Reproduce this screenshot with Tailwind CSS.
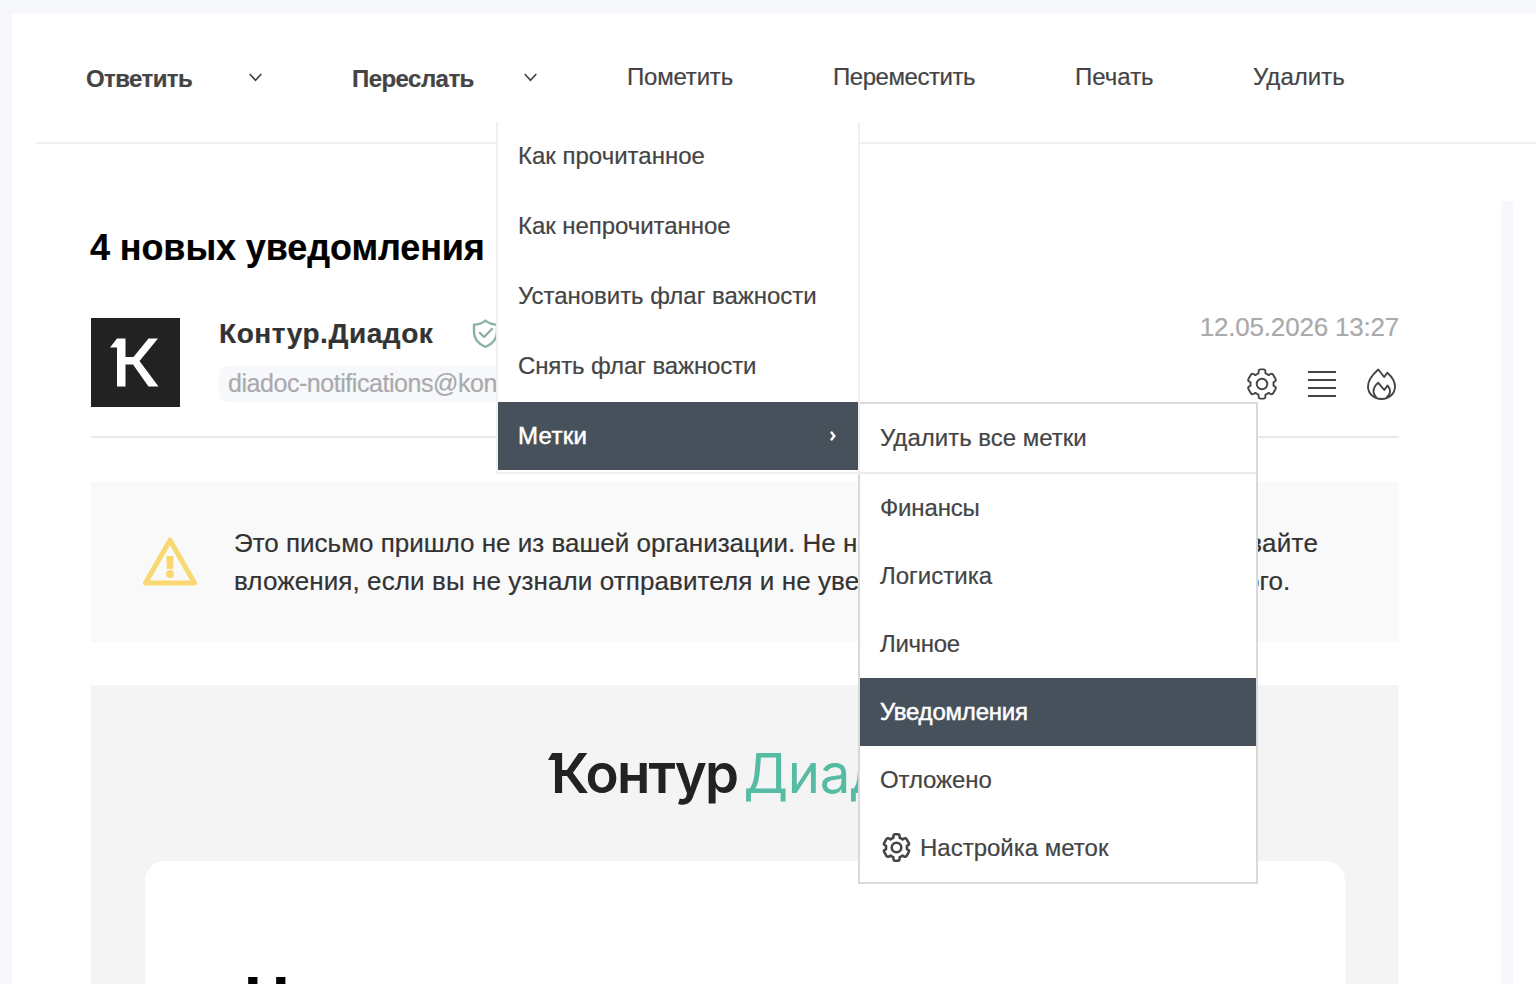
<!DOCTYPE html>
<html lang="ru">
<head>
  <meta charset="UTF-8" />
  <meta name="viewport" content="width=device-width, initial-scale=1.0"/>
  <title>4 новых уведомления</title>
  <script src="https://cdn.jsdelivr.net/npm/@tailwindcss/browser@4"></script>
</head>
<body class="h-screen overflow-hidden bg-[#f6f8fb] font-['Liberation_Sans',Arial,sans-serif] text-[24px] text-[#444] [-webkit-text-stroke:0.2px_currentColor]">
  <svg class="hidden">
    <symbol id="gear" viewBox="0 0 32 32">
      <path d="M12.6 5.2V3.1Q12.6 1.6 14.2 1.4H17.8Q19.4 1.6 19.4 3.1V5.2L22.7 7.1L24.5 6Q26 5.3 27 6.6L29.6 11.1Q30.3 12.5 29 13.4L27.5 14.3V17.7L29 18.6Q30.3 19.5 29.6 20.9L27 25.4Q26 26.7 24.5 26L22.7 24.9L19.4 26.8V28.9Q19.4 30.4 17.8 30.6H14.2Q12.6 30.4 12.6 28.9V26.8L9.3 24.9L7.5 26Q6 26.7 5 25.4L2.4 20.9Q1.7 19.5 3 18.6L4.5 17.7V14.3L3 13.4Q1.7 12.5 2.4 11.1L5 6.6Q6 5.3 7.5 6L9.3 7.1Z" fill="none" stroke="currentColor" stroke-linejoin="round"/>
      <circle cx="16" cy="16" r="5.3" fill="none" stroke="currentColor"/>
    </symbol>
  </svg>

  <div class="ml-3 mt-[14px] h-[970px] bg-white">
    <!-- Панель действий -->
    <div class="ml-6 flex h-[130px] items-center border-b-2 border-[#f0f0f0] pb-[2px] pl-[50px] leading-[28px]">
      <div class="w-[163px] pt-1 font-bold tracking-[-0.6px]">Ответить</div>
      <svg class="mr-[90px] w-[13px]" viewBox="0 0 13 9" fill="none" stroke="#444" stroke-width="1.7"><path d="M.7 1L6.5 7.3L12.3 1"/></svg>
      <div class="w-[172px] pt-1 font-bold tracking-[-0.55px]">Переслать</div>
      <svg class="mr-[90px] w-[13px]" viewBox="0 0 13 9" fill="none" stroke="#444" stroke-width="1.7"><path d="M.7 1L6.5 7.3L12.3 1"/></svg>
      <div class="w-[206px] tracking-[-0.2px]">Пометить</div>
      <div class="w-[242px] tracking-[-0.45px]">Переместить</div>
      <div class="w-[178px]">Печать</div>
      <div>Удалить</div>
    </div>

    <div class="flex h-[840px] overflow-hidden">
      <div class="w-[1489px] pl-[79px] pr-[102px]">
        <h1 class="-ml-px mt-[84px] text-[36px] font-bold leading-[40px] tracking-[-0.1px] text-black">4 новых уведомления</h1>

        <!-- Отправитель -->
        <div class="mt-[50px] flex h-[120px] border-b-2 border-[#e8e8e8]">
          <svg class="size-[89px] shrink-0 bg-[#222]" viewBox="0 0 89 89" fill="#fff">
            <path d="M26 20.5H34.5V39H42.5L57.5 20.5H67L48.5 43L67.5 68.5H57.5L42 46.5H34.5V68.5H26V29.5H19Z"/>
          </svg>
          <div class="ml-[39px] grow">
            <div class="flex h-[32px] items-center">
              <span class="text-[28px] font-bold tracking-[0.55px] text-[#333]">Контур.Диадок</span>
              <svg class="ml-[39px] h-[30px] w-[27px]" viewBox="0 0 27 30" fill="none" stroke="#8bb0a6" stroke-width="2.4" stroke-linejoin="round" stroke-linecap="round">
                <path d="M13.5 1.600Q8.500 5.600 2 5.600V13Q2 23 13.5 28Q25 23 25 13V5.600Q18.500 5.600 13.5 1.600Z"/>
                <path d="M8 14L12 18L20 10"/>
              </svg>
            </div>
            <div class="mt-4 inline-block h-9 rounded-lg bg-[#f6f8fc] px-[9px] text-[25px] leading-[35px] tracking-[-0.45px] text-[#aaa]">diadoc-notifications@kontur.ru</div>
          </div>
          <div class="flex flex-col items-end">
            <div class="mt-[-6px] text-[26px] leading-[30px] tracking-[-0.2px] text-[#aaa]">12.05.2026 13:27</div>
            <div class="mr-[3px] mt-[26px] flex items-center gap-[30px]">
              <svg class="size-8 text-[#444]" stroke-width="1.9"><use href="#gear"/></svg>
              <svg class="h-8 w-[28px]" viewBox="0 0 28 32" stroke="#444" stroke-width="2"><path d="M0 4H28M0 12H28M0 20H28M0 28H28"/></svg>
              <svg class="h-8 w-[30px]" viewBox="0 0 30 32" fill="none" stroke="#444" stroke-width="1.9" stroke-linejoin="round">
                <path d="M12.3 1.5Q2 10.5 2 18.5C2 26 8 31 15.5 31S29 26 29 18.5Q29 11.500 21.300 4.800L18.200 9Z"/>
                <path d="M10.500 29.800Q7.500 27 7.500 23.500Q7.500 18.500 12.300 14.800L18.300 22L21.500 17.500Q24 20 24 23.500Q24 27 20.500 29.800"/>
              </svg>
            </div>
          </div>
        </div>

        <!-- Предупреждение -->
        <div class="mt-[44px] flex h-[160px] items-center bg-[#f9f9f9] pl-[52px]">
          <svg class="h-[50px] w-[54px]" viewBox="0 0 54 50" fill="none" stroke="#f9d871" stroke-width="5" stroke-linejoin="round">
            <path d="M27 3.200L51.500 46H2.500Z"/>
            <path d="M23.200 19H30.800L30.200 32H23.800Z" fill="#f9d871" stroke="none"/>
            <circle cx="27" cy="37" r="4" fill="#f9d871" stroke="none"/>
          </svg>
          <p class="ml-[37px] whitespace-nowrap text-[26px] leading-[38px] text-[#333]">
            Это письмо пришло не из вашей организации. Не на<span class="tracking-[0.26px]">жимайте на ссылки и не открывайте</span><br/>
            <span class="tracking-[0.1px]">вложения, если вы не узнали отправителя и не уверены в безопасности содержимого.</span>
          </p>
        </div>

        <!-- Тело письма -->
        <div class="mt-[43px] h-[320px] bg-[#f4f4f4] px-[54px] pt-[50px]">
          <div class="flex h-[78px] pl-[403px] font-[Inter,sans-serif] text-[54.5px] leading-[76px] [-webkit-text-stroke:0]">
            <svg class="-mr-[6px] mt-[18px] h-[7px] w-[9px]" viewBox="0 0 9 7" fill="#222"><path d="M0 7L4 0H9V7Z"/></svg>
            <span class="font-semibold tracking-[-1.7px] text-[#222]">Контур</span>
            <span class="ml-[6px] tracking-[-0.3px] text-[#55bba3]">Диадок</span>
          </div>
          <div class="mt-12 h-[200px] rounded-[20px] bg-white pl-[99px] pt-[102px] text-[63px] font-bold leading-[70px] text-black">Н</div>
        </div>
      </div>
      <div class="mt-[57px] w-3 bg-[#f6f8fb]"></div>
    </div>
  </div>

  <!-- Меню «Пометить» -->
  <div class="absolute left-[496px] top-[122px] z-20 flex h-[352px] w-[364px] flex-col gap-[2px] border-2 border-t-0 border-[#efefef] bg-white leading-[68px]">
    <div class="px-5">Как прочитанное</div>
    <div class="px-5 tracking-[-0.05px]">Как непрочитанное</div>
    <div class="px-5 tracking-[-0.04px]">Установить флаг важности</div>
    <div class="px-5 tracking-[-0.12px]">Снять флаг важности</div>
    <div class="flex items-center justify-between bg-[#47515b] pl-5 pr-[22px] tracking-[0.3px] text-white [-webkit-text-stroke:0.5px_white]">
      Метки
      <svg class="h-[10px] w-[6px]" viewBox="0 0 6 10" fill="none" stroke="#fff" stroke-width="2.400"><path d="M1 .8L4.300 5L1 9.200"/></svg>
    </div>
  </div>

  <!-- Список меток -->
  <div class="absolute left-[858px] top-[402px] z-10 w-[400px] border-2 border-[#d9d9d9] bg-white leading-[68px]">
    <div class="border-b-2 border-[#ebebed] px-5">Удалить все метки</div>
    <div class="px-5 tracking-[-0.15px]">Финансы</div>
    <div class="px-5">Логистика</div>
    <div class="px-5 tracking-[-0.3px]">Личное</div>
    <div class="bg-[#47515b] px-5 tracking-[-0.2px] text-white [-webkit-text-stroke:0.5px_white]">Уведомления</div>
    <div class="px-5 tracking-[-0.1px]">Отложено</div>
    <div class="flex items-center pl-[22px]">
      <svg class="-mt-0.5 mr-[9px] size-[29px] text-[#444]" stroke-width="2.800"><use href="#gear"/></svg>
      Настройка меток
    </div>
  </div>
</body>
</html>
